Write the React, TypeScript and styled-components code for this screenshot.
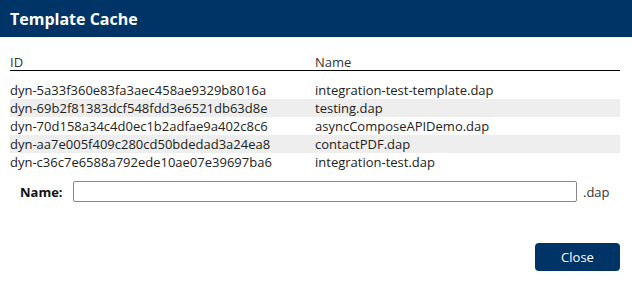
import React from "react";
import styled, { createGlobalStyle } from "styled-components";

const Global = createGlobalStyle`
  html, body { margin: 0; padding: 0; background: #fff; }
  body { font-family: "Open Sans", "Liberation Sans", sans-serif; color: #222; }
  * { box-sizing: border-box; }
`;

const Dialog = styled.div`
  width: 632px;
  height: 284px;
  display: flex;
  flex-direction: column;
  background: #fff;
`;

const Header = styled.div`
  height: 37px;
  background: #003366;
  color: #fff;
  display: flex;
  align-items: center;
  padding: 0 10px;
  font-size: 16px;
  font-weight: 700;
`;

const Body = styled.div`
  flex: 1;
  padding: 17px 12px 0 10px;
  display: flex;
  flex-direction: column;
`;

const Table = styled.div`
  display: flex;
  flex-direction: column;
  font-size: 13px;
`;

const HeadRow = styled.div`
  display: grid;
  grid-template-columns: 305px 1fr;
  height: 17px;
  line-height: 17px;
  border-bottom: 1px solid #000;
  color: #333;
  margin-bottom: 10px;
`;

const Row = styled.div<{ $alt: boolean }>`
  display: grid;
  grid-template-columns: 305px 1fr;
  height: 18px;
  line-height: 18px;
  background: ${(p) => (p.$alt ? "#eeeeee" : "transparent")};
  color: #222;
`;

const NameRow = styled.div`
  display: flex;
  align-items: center;
  margin-top: 10px;
  padding-left: 10px;
  font-size: 13px;
`;

const Label = styled.label`
  font-weight: 700;
  width: 53px;
  color: #111;
`;

const Input = styled.input`
  width: 504px;
  height: 21px;
  border: 1px solid #888;
  border-radius: 2px;
  padding: 0 4px;
  font: inherit;
`;

const Suffix = styled.span`
  margin-left: 6px;
  color: #333;
`;

const Footer = styled.div`
  display: flex;
  justify-content: flex-end;
  margin-top: 41px;
`;

const Button = styled.button`
  width: 85px;
  height: 28px;
  background: #003366;
  color: #fff;
  border: none;
  border-radius: 4px;
  font-family: "Open Sans", "Liberation Sans", sans-serif;
  font-size: 13px;
  cursor: pointer;
`;

const rows = [
  ["dyn-5a33f360e83fa3aec458ae9329b8016a", "integration-test-template.dap"],
  ["dyn-69b2f81383dcf548fdd3e6521db63d8e", "testing.dap"],
  ["dyn-70d158a34c4d0ec1b2adfae9a402c8c6", "asyncComposeAPIDemo.dap"],
  ["dyn-aa7e005f409c280cd50bdedad3a24ea8", "contactPDF.dap"],
  ["dyn-c36c7e6588a792ede10ae07e39697ba6", "integration-test.dap"],
];

export default function App() {
  return (
    <>
      <Global />
      <Dialog>
        <Header>Template Cache</Header>
        <Body>
          <Table>
            <HeadRow>
              <span>ID</span>
              <span>Name</span>
            </HeadRow>
            {rows.map(([id, name], i) => (
              <Row key={id} $alt={i % 2 === 1}>
                <span>{id}</span>
                <span>{name}</span>
              </Row>
            ))}
          </Table>
          <NameRow>
            <Label>Name:</Label>
            <Input type="text" />
            <Suffix>.dap</Suffix>
          </NameRow>
          <Footer>
            <Button>Close</Button>
          </Footer>
        </Body>
      </Dialog>
    </>
  );
}
